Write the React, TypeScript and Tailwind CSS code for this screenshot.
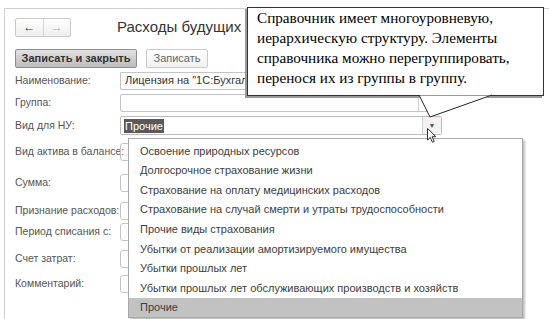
import React from 'react'

const rows = [
  { label: 'Наименование:', mt: 'mt-[4px]', kind: 'name' },
  { label: 'Группа:', mt: 'mt-[4px]', kind: 'group' },
  { label: 'Вид для НУ:', mt: 'mt-[5px]', kind: 'nu' },
  { label: 'Вид актива в балансе:', mt: 'mt-[8px]', kind: 'hidden' },
  { label: 'Сумма:', mt: 'mt-[13px]', kind: 'hidden' },
  { label: 'Признание расходов:', mt: 'mt-[10px]', kind: 'hidden' },
  { label: 'Период списания с:', mt: 'mt-[3px]', kind: 'hidden' },
  { label: 'Счет затрат:', mt: 'mt-[9px]', kind: 'hidden' },
  { label: 'Комментарий:', mt: 'mt-[7px]', kind: 'hidden' }
]

const items = [
  'Освоение природных ресурсов',
  'Долгосрочное страхование жизни',
  'Страхование на оплату медицинских расходов',
  'Страхование на случай смерти и утраты трудоспособности',
  'Прочие виды страхования',
  'Убытки от реализации амортизируемого имущества',
  'Убытки прошлых лет',
  'Убытки прошлых лет обслуживающих производств и хозяйств',
  'Прочие'
]

function DropButton({ wide }: { wide?: boolean }) {
  return (
    <div
      className={`flex h-full items-center justify-center border-l border-[#d0d0d0] ${
        wide ? 'w-[19px] bg-[#f2f2f2]' : 'w-[16px]'
      }`}
    >
      <span className="text-[7px] leading-none text-[#555]">▼</span>
    </div>
  )
}

function Field({ kind }: { kind: string }) {
  if (kind === 'name') {
    return (
      <div className="flex h-[18px] w-[128px] items-center overflow-hidden whitespace-nowrap rounded-l-[2px] border-y border-l border-[#c4c4c4] px-[4px] text-[11px] text-[#333]">
        Лицензия на "1С:Бухгалте
      </div>
    )
  }
  if (kind === 'group') {
    return (
      <div className="flex h-[18px] w-[315px] items-center justify-end rounded-[2px] border border-[#c4c4c4]">
        <DropButton />
      </div>
    )
  }
  if (kind === 'nu') {
    return (
      <div className="flex h-[19px] w-[322px] items-center justify-between rounded-[2px] border border-[#bdbdbd] pl-[3px]">
        <span className="bg-[#5a5a5a] px-[1px] text-[11px] leading-[14px] text-white">Прочие</span>
        <DropButton wide />
      </div>
    )
  }
  return <div className="h-[18px] w-[40px] rounded-[3px] border border-[#c4c4c4]" />
}

function Cursor() {
  return (
    <svg width="11" height="16" viewBox="0 0 11 16" className="absolute left-[427px] top-[128px]">
      <path d="M0.5 0.5 L0.5 12 L3.3 9.4 L5.4 14.3 L7.2 13.5 L5.1 8.7 L9 8.7 Z" fill="white" stroke="#333" strokeWidth="1" />
    </svg>
  )
}

export default function App() {
  return (
    <div className="relative h-[319px] w-[549px] overflow-hidden bg-white font-['Liberation_Sans',Arial,sans-serif]">
      <div className="ml-[4px] mt-[8px] h-[311px] border-l border-t border-[#cfcfcf] pl-[10px]">
        <div className="mt-[7px] flex items-center">
          <div className="flex h-[19px] w-[56px] rounded-[2px] border border-[#c8c8c8] bg-gradient-to-b from-white to-[#eeeeee]">
            <div className="flex flex-1 items-center justify-center border-r border-[#d4d4d4] text-[12px] text-[#333]">
              ←
            </div>
            <div className="flex flex-1 items-center justify-center text-[12px] text-[#aaa]">→</div>
          </div>
          <div className="ml-[46px] w-[128px] overflow-hidden whitespace-nowrap text-[15px] text-[#333]">
            Расходы будущих п
          </div>
        </div>

        <div className="mt-[10px] flex gap-[9px]">
          <div className="flex h-[19px] w-[122px] items-center justify-center rounded-[2px] border border-[#8e8e8e] bg-gradient-to-b from-[#e2e2e2] to-[#bdbdbd] text-[11px] font-bold text-[#333]">
            Записать и закрыть
          </div>
          <div className="flex h-[19px] w-[62px] items-center justify-center rounded-[2px] border border-[#cacaca] bg-gradient-to-b from-white to-[#f1f1f1] text-[11px] text-[#666]">
            Записать
          </div>
        </div>

        <div>
          {rows.map((r) => (
            <div key={r.label} className={`flex h-[18px] items-center ${r.mt}`}>
              <div className="w-[105px] shrink-0 whitespace-nowrap text-[10.5px] text-[#555]">{r.label}</div>
              <Field kind={r.kind} />
            </div>
          ))}
        </div>
      </div>

      {/* dropdown list */}
      <div className="absolute left-[128px] top-[138px] h-[180px] w-[395px] border border-[#a8a8a8] bg-white pt-[2px] shadow-[2px_2px_2px_rgba(0,0,0,0.25)]">
        {items.map((t, i) => (
          <div
            key={t + i}
            className={`flex h-[19.6px] items-center pl-[11px] text-[11px] text-[#3d3d3d] ${
              i === items.length - 1 ? 'bg-[#c2c2c2]' : ''
            }`}
          >
            {t}
          </div>
        ))}
      </div>

      <Cursor />

      {/* callout */}
      <div className="absolute left-[247px] top-[7px] h-[89px] w-[297px] border border-[#333] bg-white pl-[9px] pt-0 font-['Liberation_Serif','Times_New_Roman',serif] text-[15.2px] leading-[20px] text-black shadow-[-2px_2px_0_#9a9a9a]">
        Справочник имеет многоуровневую,
        <br />
        иерархическую структуру. Элементы
        <br />
        справочника можно перегруппировать,
        <br />
        перенося их из группы в группу.
      </div>
      <svg width="549" height="319" className="pointer-events-none absolute left-0 top-0">
        <polygon points="419,95.5 430,117 492,95.5" fill="white" />
        <polyline points="419,95 430,117 492,95" fill="none" stroke="#222" strokeWidth="1" />
      </svg>
    </div>
  )
}
